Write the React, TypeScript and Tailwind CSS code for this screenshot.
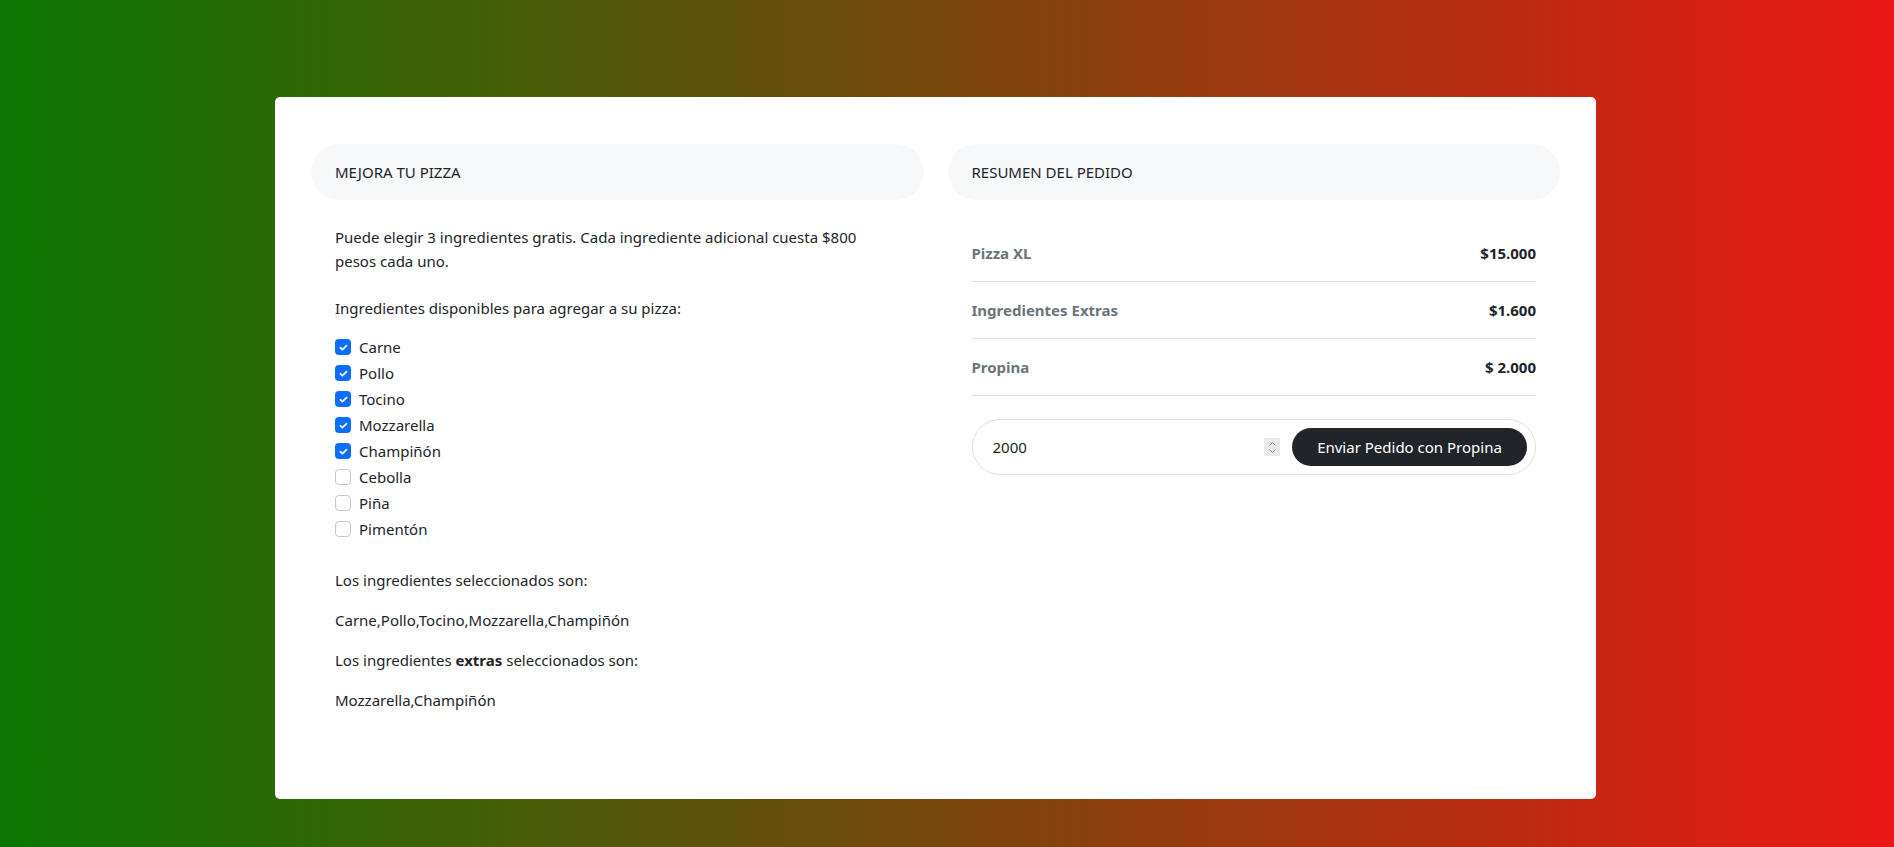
const ingredientes = [
  { name: 'Carne', checked: true },
  { name: 'Pollo', checked: true },
  { name: 'Tocino', checked: true },
  { name: 'Mozzarella', checked: true },
  { name: 'Champiñón', checked: true },
  { name: 'Cebolla', checked: false },
  { name: 'Piña', checked: false },
  { name: 'Pimentón', checked: false },
];

const resumen = [
  { label: 'Pizza XL', value: '$15.000' },
  { label: 'Ingredientes Extras', value: '$1.600' },
  { label: 'Propina', value: '$ 2.000' },
];

const Check = ({ checked }: { checked: boolean }) =>
  checked ? (
    <span className="flex h-4 w-4 shrink-0 items-center justify-center rounded-[4px] bg-[#0d6efd]">
      <svg width="11" height="11" viewBox="0 0 20 20" fill="none">
        <path d="M4.5 10.5l3.5 3.5 7.5-7.5" stroke="#fff" strokeWidth="3.2" strokeLinecap="round" strokeLinejoin="round" />
      </svg>
    </span>
  ) : (
    <span className="h-4 w-4 shrink-0 rounded-[4px] border border-[#c4c8cc] bg-white" />
  );

const App = () => {
  return (
    <div
      className="flex min-h-[847px] w-full items-start justify-center bg-linear-to-r/srgb from-[#0a7800] to-[#e91717] pr-[23px] pt-[97px] text-[15px] leading-6 text-[#212529]"
      style={{ fontFamily: '"Noto Sans", "Open Sans", sans-serif' }}
    >
      <div className="grid h-[702px] w-[1321px] shrink-0 grid-cols-2 gap-6 rounded-[5px] bg-white px-9 pt-[47px]">
        {/* izquierda */}
        <div className="flex flex-col">
          <div className="flex h-14 items-center rounded-full bg-[#f7f8f9] px-6">MEJORA TU PIZZA</div>
          <div className="px-6 pt-[25px]">
            <p className="mb-[23px]">Puede elegir 3 ingredientes gratis. Cada ingrediente adicional cuesta $800 pesos cada uno.</p>
            <p className="mb-[15px]">Ingredientes disponibles para agregar a su pizza:</p>
            <div className="mb-[27px]">
              {ingredientes.map((i) => (
                <label key={i.name} className="mb-[2px] flex h-6 items-center gap-2">
                  <Check checked={i.checked} />
                  <span>{i.name}</span>
                </label>
              ))}
            </div>
            <p className="mb-4">Los ingredientes seleccionados son:</p>
            <p className="mb-4">Carne,Pollo,Tocino,Mozzarella,Champiñón</p>
            <p className="mb-4">
              Los ingredientes <strong className="font-bold">extras</strong> seleccionados son:
            </p>
            <p>Mozzarella,Champiñón</p>
          </div>
        </div>

        {/* derecha */}
        <div className="flex flex-col">
          <div className="flex h-14 items-center rounded-full bg-[#f7f8f9] px-6">RESUMEN DEL PEDIDO</div>
          <div className="px-6 pt-[25px]">
            {resumen.map((r) => (
              <div key={r.label} className="flex items-center justify-between border-b border-[#dee2e6] py-4 font-bold">
                <span className="text-[#6c757d]">{r.label}</span>
                <span>{r.value}</span>
              </div>
            ))}
            <div className="mt-[23px] flex h-14 items-center rounded-full border border-[#dee2e6] p-2 pl-[20px]">
              <input
                type="text"
                defaultValue="2000"
                className="min-w-0 flex-1 bg-transparent outline-none"
              />
              <span className="mr-[12px] flex h-[18px] w-4 items-center justify-center bg-[#e9eaec]">
                <svg width="9" height="13" viewBox="0 0 9 13" fill="none">
                  <path d="M1.5 4.5l3-3 3 3M1.5 8.5l3 3 3-3" stroke="#8a8d91" strokeWidth="1" />
                </svg>
              </span>
              <button className="h-[38px] w-[235px] shrink-0 rounded-full bg-[#212529] text-white">Enviar Pedido con Propina</button>
            </div>
          </div>
        </div>
      </div>
    </div>
  );
};

export default App;
